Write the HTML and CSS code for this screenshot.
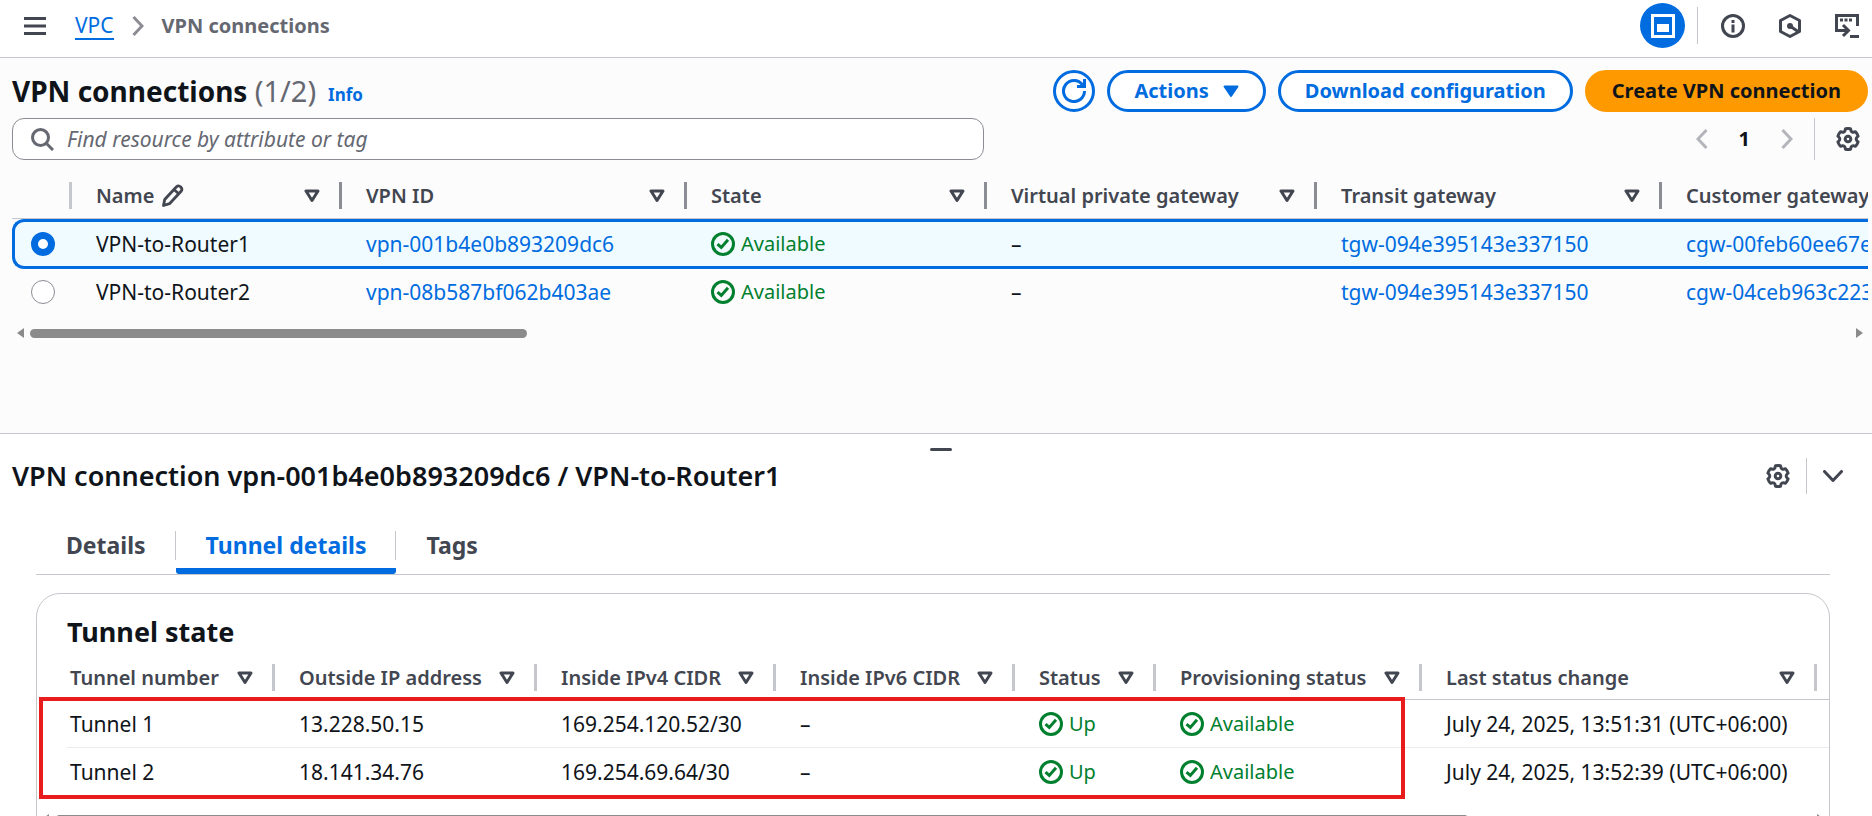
FILE: index.html
```html
<!DOCTYPE html>
<html lang="en">
<head>
<meta charset="utf-8">
<title>VPN connections | VPC</title>
<link rel="stylesheet" href="styles.css">
</head>
<body>
<svg class="sprite" aria-hidden="true">
  <symbol id="sort" viewBox="0 0 16 14"><path d="M2 2h12L8 11.500z" fill="none" stroke="currentColor" stroke-width="3" stroke-linejoin="round"/></symbol>
  <symbol id="ok" viewBox="0 0 24 24"><g fill="none" stroke="currentColor" stroke-width="3"><circle cx="12" cy="12" r="10.500"/><path d="M6.500 12.200l3.800 3.300L17 7.800"/></g></symbol>
  <symbol id="gear" viewBox="0 0 24 24"><g fill="none" stroke="currentColor" stroke-width="3" stroke-linejoin="round"><path d="M9.500 1.800Q12 1.200 14.500 1.800Q15.100 6.600 19.500 4.700Q21.300 6.600 22.100 9.100Q18.200 12 22.100 14.900Q21.300 17.400 19.500 19.300Q15.100 17.400 14.500 22.200Q12 22.800 9.500 22.200Q8.900 17.400 4.500 19.300Q2.700 17.400 1.900 14.900Q5.800 12 1.900 9.100Q2.700 6.600 4.500 4.700Q8.900 6.600 9.500 1.800z"/><circle cx="12" cy="12" r="2.800"/></g></symbol>
</svg>

<header class="topbar">
  <button class="icon-btn" aria-label="Open navigation"><svg width="22" height="20" viewBox="0 0 22 20"><path d="M0 2.500h22M0 10h22M0 17.500h22" stroke="currentColor" stroke-width="3"/></svg></button>
  <nav class="crumbs" aria-label="Breadcrumbs">
    <a href="#">VPC</a>
    <svg width="12" height="20" viewBox="0 0 12 20"><path d="M1.500 1l8.500 9-8.500 9" fill="none" stroke="#8c8c94" stroke-width="3"/></svg>
    <span>VPN connections</span>
  </nav>
  <div class="tools">
    <button class="icon-btn panel-btn" aria-label="Split panel"><svg width="24" height="24" viewBox="0 0 24 24"><path d="M1.500 1.500h21v21h-21z" fill="none" stroke="#fff" stroke-width="3"/><path d="M6 10h12v8H6z" fill="#fff"/></svg></button>
    <span class="tool-rule"></span>
    <button class="icon-btn" aria-label="Information"><svg width="24" height="24" viewBox="0 0 24 24"><circle cx="12" cy="12" r="10.500" fill="none" stroke="currentColor" stroke-width="3"/><path d="M10.500 6h3v3h-3zM10.500 10.500h3v8h-3z" fill="currentColor"/></svg></button>
    <button class="icon-btn" aria-label="Amazon Q"><svg width="24" height="24" viewBox="0 0 24 24"><path d="M12 1.500l9.500 5V17.500L12 22.500l-9.500-5V6.500z" fill="none" stroke="currentColor" stroke-width="3" stroke-linejoin="round"/><circle cx="12" cy="12" r="3" fill="currentColor"/><path d="M12 12l8 5.500" stroke="currentColor" stroke-width="3"/></svg></button>
    <button class="icon-btn" aria-label="CloudShell"><svg width="24" height="24" viewBox="0 0 24 24"><g fill="none" stroke="currentColor" stroke-width="3"><path d="M22.500 12V1.500h-21v15H12"/><path d="M8 11l5.500 5.500L8 22"/><path d="M15 22.500h9"/></g><path d="M5 4.500h3v3H5zM9.500 4.500h3v3h-3zM14 4.500h3v3h-3z" fill="currentColor"/></svg></button>
  </div>
</header>

<main class="resources">
  <div class="title-row">
    <h1>VPN connections <span class="count">(1/2)</span></h1>
    <a class="info" href="#">Info</a>
    <div class="actions">
      <button class="btn round" aria-label="Refresh"><svg width="24" height="24" viewBox="0 0 24 24"><path d="M20.600 6A10.500 10.500 0 1 0 22.500 12" fill="none" stroke="currentColor" stroke-width="3"/><path d="M22.500 0v7.500H15" fill="none" stroke="currentColor" stroke-width="3"/></svg></button>
      <button class="btn">Actions <svg width="16" height="13" viewBox="0 0 16 13"><path d="M1.500 1.500h13L8 11z" fill="currentColor" stroke="currentColor" stroke-width="2" stroke-linejoin="round"/></svg></button>
      <button class="btn">Download configuration</button>
      <button class="btn primary">Create VPN connection</button>
    </div>
  </div>
  <div class="filter-row">
    <label class="search">
      <svg width="23" height="23" viewBox="0 0 23 23"><circle cx="9.500" cy="9.500" r="8" fill="none" stroke="currentColor" stroke-width="3"/><path d="M15 15l7 7" stroke="currentColor" stroke-width="3"/></svg>
      <input type="search" aria-label="Find resource" placeholder="Find resource by attribute or tag">
    </label>
    <div class="pager">
      <button class="icon-btn off" aria-label="Previous page"><svg width="12" height="20" viewBox="0 0 12 20"><path d="M10.500 1L2 10l8.500 9" fill="none" stroke="currentColor" stroke-width="3"/></svg></button>
      <button class="page">1</button>
      <button class="icon-btn off" aria-label="Next page"><svg width="12" height="20" viewBox="0 0 12 20"><path d="M1.500 1l8.500 9-8.500 9" fill="none" stroke="currentColor" stroke-width="3"/></svg></button>
      <span class="pager-rule"></span>
      <button class="icon-btn" aria-label="Preferences"><svg width="24" height="24"><use href="#gear"/></svg></button>
    </div>
  </div>
  <div class="scroller">
    <table class="grid connections">
      <colgroup><col class="c-select"><col class="c-name"><col class="c-id"><col class="c-state"><col class="c-vpg"><col class="c-id"><col class="c-id"></colgroup>
      <thead>
        <tr>
          <th><div class="head light"></div></th>
          <th><div class="head">Name <svg class="pencil" width="22" height="23" viewBox="0 0 22 23"><path d="M1.500 21.500l1.200-6L14.500 2.700q2-1.800 4.300.3 2 2.200.3 4.300L7.500 19.700zM12 5.500l5 4.500" fill="none" stroke="currentColor" stroke-width="2.800" stroke-linejoin="round"/></svg><button class="sort" aria-label="Sort by name"><svg width="16" height="14"><use href="#sort"/></svg></button></div></th>
          <th><div class="head">VPN ID<button class="sort" aria-label="Sort by VPN ID"><svg width="16" height="14"><use href="#sort"/></svg></button></div></th>
          <th><div class="head">State<button class="sort" aria-label="Sort by state"><svg width="16" height="14"><use href="#sort"/></svg></button></div></th>
          <th><div class="head">Virtual private gateway<button class="sort" aria-label="Sort by virtual private gateway"><svg width="16" height="14"><use href="#sort"/></svg></button></div></th>
          <th><div class="head">Transit gateway<button class="sort" aria-label="Sort by transit gateway"><svg width="16" height="14"><use href="#sort"/></svg></button></div></th>
          <th><div class="head">Customer gateway</div></th>
        </tr>
      </thead>
      <tbody>
        <tr class="selected">
          <td><input type="radio" name="vpn" aria-label="VPN-to-Router1" checked></td>
          <td>VPN-to-Router1</td>
          <td><a href="#">vpn-001b4e0b893209dc6</a></td>
          <td><span class="status"><svg width="24" height="24"><use href="#ok"/></svg>Available</span></td>
          <td>–</td>
          <td><a href="#">tgw-094e395143e337150</a></td>
          <td><a href="#">cgw-00feb60ee67e</a></td>
        </tr>
        <tr>
          <td><input type="radio" name="vpn" aria-label="VPN-to-Router2"></td>
          <td>VPN-to-Router2</td>
          <td><a href="#">vpn-08b587bf062b403ae</a></td>
          <td><span class="status"><svg width="24" height="24"><use href="#ok"/></svg>Available</span></td>
          <td>–</td>
          <td><a href="#">tgw-094e395143e337150</a></td>
          <td><a href="#">cgw-04ceb963c223</a></td>
        </tr>
      </tbody>
    </table>
  </div>
  <div class="hbar">
    <svg width="7" height="10" viewBox="0 0 7 10"><path d="M7 0v10L0 5z" fill="#8b8b8b"/></svg>
    <span class="track"><span class="thumb short"></span></span>
    <svg width="7" height="10" viewBox="0 0 7 10"><path d="M0 0v10l7-5z" fill="#8b8b8b"/></svg>
  </div>
</main>

<section class="panel">
  <div class="handle-row"><div class="handle"></div></div>
  <div class="panel-head">
    <h2>VPN connection vpn-001b4e0b893209dc6 / VPN-to-Router1</h2>
    <div class="panel-tools">
      <button class="icon-btn" aria-label="Panel preferences"><svg width="24" height="24"><use href="#gear"/></svg></button>
      <span class="panel-rule"></span>
      <button class="icon-btn" aria-label="Close panel"><svg width="20" height="13" viewBox="0 0 20 13"><path d="M1.500 1.500L10 10.500l8.500-9" fill="none" stroke="currentColor" stroke-width="3" stroke-linecap="round" stroke-linejoin="round"/></svg></button>
    </div>
  </div>
  <div class="panel-body">
    <div class="tabs" role="tablist">
      <button role="tab" class="tab"><span>Details</span></button>
      <button role="tab" class="tab active" aria-selected="true"><span>Tunnel details</span></button>
      <button role="tab" class="tab"><span>Tags</span></button>
    </div>
    <div class="card">
      <h2 class="card-title">Tunnel state</h2>
      <div class="scroller tunnel-scroller">
        <table class="grid tunnels">
          <colgroup><col class="t-num"><col class="t-out"><col class="t-in"><col class="t-in"><col class="t-status"><col class="t-prov"><col class="t-last"><col></colgroup>
          <thead>
            <tr>
              <th><div class="head light">Tunnel number<button class="sort" aria-label="Sort by tunnel number"><svg width="16" height="14"><use href="#sort"/></svg></button></div></th>
              <th><div class="head light">Outside IP address<button class="sort" aria-label="Sort by outside IP"><svg width="16" height="14"><use href="#sort"/></svg></button></div></th>
              <th><div class="head light">Inside IPv4 CIDR<button class="sort" aria-label="Sort by IPv4 CIDR"><svg width="16" height="14"><use href="#sort"/></svg></button></div></th>
              <th><div class="head light">Inside IPv6 CIDR<button class="sort" aria-label="Sort by IPv6 CIDR"><svg width="16" height="14"><use href="#sort"/></svg></button></div></th>
              <th><div class="head light">Status<button class="sort" aria-label="Sort by status"><svg width="16" height="14"><use href="#sort"/></svg></button></div></th>
              <th><div class="head light">Provisioning status<button class="sort" aria-label="Sort by provisioning status"><svg width="16" height="14"><use href="#sort"/></svg></button></div></th>
              <th><div class="head light">Last status change<button class="sort" aria-label="Sort by last change"><svg width="16" height="14"><use href="#sort"/></svg></button></div></th>
              <th></th>
            </tr>
          </thead>
          <tbody>
            <tr>
              <td>Tunnel 1</td><td>13.228.50.15</td><td>169.254.120.52/30</td><td>–</td>
              <td><span class="status"><svg width="24" height="24"><use href="#ok"/></svg>Up</span></td>
              <td><span class="status"><svg width="24" height="24"><use href="#ok"/></svg>Available</span></td>
              <td>July 24, 2025, 13:51:31 (UTC+06:00)</td><td></td>
            </tr>
            <tr>
              <td>Tunnel 2</td><td>18.141.34.76</td><td>169.254.69.64/30</td><td>–</td>
              <td><span class="status"><svg width="24" height="24"><use href="#ok"/></svg>Up</span></td>
              <td><span class="status"><svg width="24" height="24"><use href="#ok"/></svg>Available</span></td>
              <td>July 24, 2025, 13:52:39 (UTC+06:00)</td><td></td>
            </tr>
          </tbody>
        </table>
        <div class="highlight"></div>
      </div>
      <div class="hbar card-bar">
        <svg width="7" height="10" viewBox="0 0 7 10"><path d="M7 0v10L0 5z" fill="#8b8b8b"/></svg>
        <span class="track"><span class="thumb long"></span></span>
        <svg width="7" height="10" viewBox="0 0 7 10"><path d="M0 0v10l7-5z" fill="#8b8b8b"/></svg>
      </div>
    </div>
  </div>
</section>
</body>
</html>
```
FILE: styles.css
```css
* { box-sizing: border-box; }
body {
  margin: 0;
  height: 100vh;
  display: flex;
  flex-direction: column;
  overflow: hidden;
  background: #fcfcfc;
  color: #0f141a;
  font: 20px/30px "Noto Sans", "Open Sans", sans-serif;
}
.sprite { display: none; }
svg { display: block; flex: none; }
a { color: #006ce0; text-decoration: none; }
button { font: inherit; color: inherit; background: none; border: 0; padding: 0; margin: 0; }
h1, h2 { margin: 0; font-weight: 700; }
h1 { font-size: 28px; line-height: 34px; }

.icon-btn { display: flex; align-items: center; justify-content: center; color: #424650; }

.topbar {
  flex: none;
  display: flex;
  align-items: center;
  height: 58px;
  padding: 0 13px 6px 24px;
  background: #fff;
  border-bottom: 1px solid #c6c6cd;
}
.crumbs { display: flex; align-items: center; gap: 18px; margin-left: 29px; }
.crumbs a { font-size: 21px; line-height: 26px; border-bottom: 2px solid; }
.crumbs span { color: #656871; font-weight: 700; }
.tools { display: flex; align-items: center; margin-left: auto; gap: 33px; }
.panel-btn { width: 45px; height: 45px; border-radius: 50%; background: #006ce0; }
.tool-rule { width: 1px; height: 37px; background: #c6c6cd; margin: 0 -10px 0 -21px; }

.resources { flex: none; padding: 12px 4px 95px 12px; border-bottom: 1px solid #c6c6cd; }
.title-row { display: flex; align-items: center; height: 42px; }
.count { color: #656871; font-size: 29px; font-weight: 400; }
.info { margin: 8px 0 0 12px; font-size: 17px; font-weight: 700; }
.actions { display: flex; gap: 12px; margin-left: auto; }
.btn {
  display: flex;
  align-items: center;
  gap: 14px;
  height: 42px;
  padding: 0 24px;
  border: 3px solid #006ce0;
  border-radius: 30px;
  background: #fff;
  color: #006ce0;
  font-weight: 700;
}
.btn.round { width: 42px; padding: 0; justify-content: center; }
.btn.primary { background: #ff9900; border-color: #ff9900; color: #0f141a; }

.filter-row { display: flex; justify-content: space-between; margin-top: 6px; }
.search {
  display: flex;
  align-items: center;
  gap: 13px;
  width: 972px;
  height: 42px;
  padding: 0 18px;
  border: 1px solid #8c8c94;
  border-radius: 12px;
  background: #fff;
  color: #656871;
  font-size: 21px;
}
.search input { flex: 1; border: 0; outline: 0; padding: 0; background: none; font: inherit; }
.search input::placeholder { color: #656871; font-style: italic; opacity: 1; }
.pager { display: flex; align-items: center; gap: 31px; padding-right: 8px; }
.pager .off { color: #b4b4bb; }
.page { font-weight: 700; }
.pager-rule { width: 1px; height: 42px; background: #c6c6cd; margin: 0 -10px; }

.scroller { overflow: hidden; }
.grid { table-layout: fixed; border-collapse: separate; border-spacing: 0; white-space: nowrap; }
.grid th, .grid td { padding: 0; text-align: left; }
.head {
  display: flex;
  align-items: center;
  height: 27px;
  padding: 0 19px 0 24px;
  border-right: 3px solid #8c8c94;
  color: #424650;
  font-weight: 600;
}
.head.light { border-right-color: #c6c6cd; }
.pencil { margin-left: 8px; }
.sort { margin-left: auto; color: #424650; }
.grid td { padding-left: 24px; font-size: 21px; }
.status { display: flex; align-items: center; gap: 6px; color: #00802f; font-size: 20px; }

.connections { width: 1995px; margin-top: 13px; }
.c-select { width: 60px; }
.c-name { width: 270px; }
.c-id { width: 345px; }
.c-state { width: 300px; }
.c-vpg { width: 330px; }
.connections th { height: 46px; border-bottom: 1px solid #c6c6cd; }
.connections td { height: 46px; }
.connections .selected td {
  height: 50px;
  background: #f0fbff;
  border-top: 3px solid #006ce0;
  border-bottom: 3px solid #006ce0;
}
.connections td:first-child { padding-left: 19px; }
.connections .selected td:first-child {
  padding-left: 16px;
  border-left: 3px solid #006ce0;
  border-radius: 12px 0 0 12px;
}
input[type="radio"] {
  appearance: none;
  display: block;
  width: 24px;
  height: 24px;
  margin: 0;
  border: 1px solid #8c8c94;
  border-radius: 50%;
  background: #fff;
}
input[type="radio"]:checked { border: 7px solid #006ce0; }

.hbar { display: flex; align-items: center; gap: 6px; height: 10px; margin-top: 13px; padding: 0 5px; }
.track { flex: 1; }
.thumb { display: block; height: 9px; border-radius: 5px; background: #8b8b8b; }
.thumb.short { width: 27.3%; }
.thumb.long { width: 80.5%; }

.panel { flex: 1; min-height: 0; overflow: hidden; background: #fff; }
.handle-row { display: flex; justify-content: center; padding: 14px 0 0 10px; }
.handle { width: 22px; height: 3px; border-radius: 2px; background: #424650; }
.panel-head { display: flex; align-items: center; height: 50px; padding: 0 29px 0 12px; }
.panel-head h2 { font-size: 27px; font-weight: 600; }
.panel-tools { display: flex; align-items: center; gap: 16px; margin-left: auto; }
.panel-rule { width: 1px; height: 36px; background: #c6c6cd; }

.panel-body { padding: 30px 42px 0 36px; }
.tabs { display: flex; border-bottom: 1px solid #c6c6cd; }
.tab { display: flex; flex-direction: column; border-bottom: 6px solid transparent; border-radius: 3px; color: #424650; font-size: 23px; font-weight: 700; padding-bottom: 8px; }
.tab span { padding: 0 29px 0 30px; line-height: 29px; border-right: 1px solid #c6c6cd; }
.tab:last-child span { border-right: 0; }
.tab.active { color: #006ce0; border-bottom-color: #006ce0; }

.card { margin-top: 18px; border: 1px solid #c6c6cd; border-radius: 24px; min-height: 400px; }
.card-title { padding: 20px 0 1px 30px; font-size: 27px; line-height: 36px; }
.tunnel-scroller { position: relative; padding-bottom: 4px; }
.tunnels { width: calc(100% - 30px); margin-left: 30px; }
.t-num { width: 208px; }
.t-out { width: 262px; }
.t-in { width: 239px; }
.t-status { width: 141px; }
.t-prov { width: 266px; }
.t-last { width: 395px; }
.tunnels th { height: 49px; padding-bottom: 8px; vertical-align: bottom; border-bottom: 1px solid #c6c6cd; }
.tunnels td { height: 48px; }
.tunnels tbody tr:first-child td { border-bottom: 1px solid #ebebf0; }
.tunnels td:first-child, .tunnels th:first-child .head { padding-left: 3px; }
.highlight { position: absolute; left: 2px; top: 46px; width: 1366px; height: 102px; border: 4px solid #e81c1c; }
.card-bar { margin-top: 14px; }
```
